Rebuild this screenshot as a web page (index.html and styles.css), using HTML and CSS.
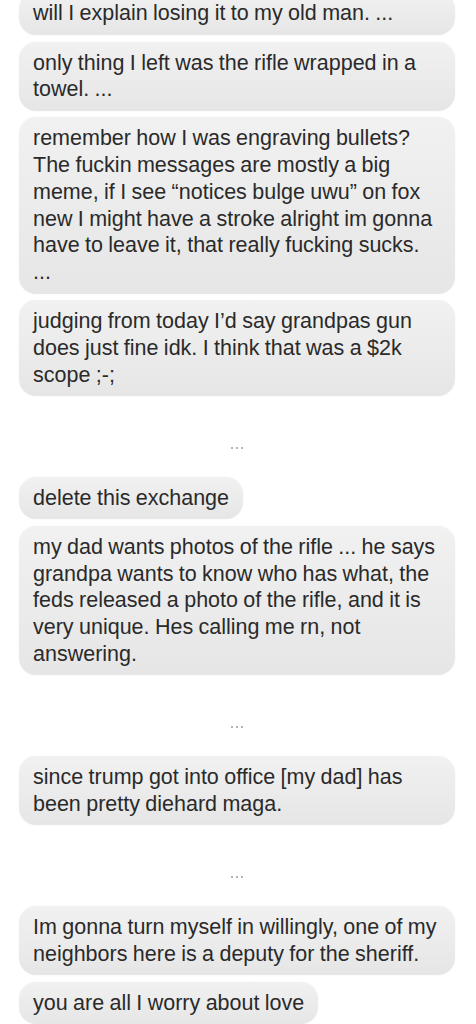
FILE: index.html
```html
<!DOCTYPE html>
<html lang="en">
<head>
    <meta charset="UTF-8">
    <meta name="viewport" content="width=device-width, initial-scale=1.0">
    <title>Messages</title>
    <link rel="stylesheet" href="styles.css">
</head>
<body>
    <div class="thread">
        <div class="bubble first">will I explain losing it to my old man. ...</div>
        <div class="bubble">only thing I left was the rifle wrapped in a towel. ...</div>
        <div class="bubble">remember how I was engraving bullets? The fuckin messages are mostly a big meme, if I see “notices bulge uwu” on fox new I might have a stroke alright im gonna have to leave it, that really fucking sucks.<br>...</div>
        <div class="bubble">judging from today I’d say grandpas gun does just fine idk. I think that was a $2k scope ;-;</div>

        <!-- gap in the thread -->
        <div class="skip"><span></span><span></span><span></span></div>

        <div class="bubble">delete this exchange</div>
        <div class="bubble">my dad wants photos of the rifle ... he says grandpa wants to know who has what, the feds released a photo of the rifle, and it is very unique. Hes calling me rn, not answering.</div>

        <div class="skip"><span></span><span></span><span></span></div>

        <div class="bubble">since trump got into office [my dad] has been pretty diehard maga.</div>

        <div class="skip"><span></span><span></span><span></span></div>

        <div class="bubble">Im gonna turn myself in willingly, one of my neighbors here is a deputy for the sheriff.</div>
        <div class="bubble">you are all I worry about love</div>
    </div>
</body>
</html>
```

FILE: styles.css
```css
body {
    margin: 0;
    padding: 0;
    background-color: #ffffff;
    font-family: "Liberation Sans", Arial, sans-serif;
    color: #2a2a2a;
    overflow: hidden;
}
.thread {
    display: flex;
    flex-direction: column;
    align-items: flex-start;
    gap: 6.5px;
    padding: 0 21px 0 19px;
}
.bubble {
    box-sizing: border-box;
    max-width: 436px;
    padding: 8px 14px;
    border-radius: 17px;
    background: linear-gradient(#f1f1f1, #e6e6e6);
    box-shadow: 0 0 2px rgba(0, 0, 0, 0.06);
    font-size: 21.5px;
    line-height: 26.7px;
    word-spacing: -0.6px;
}
.bubble.first {
    width: 436px;
    margin-top: -7.7px;
}
.skip {
    align-self: stretch;
    display: flex;
    justify-content: center;
    gap: 3px;
    margin: 44px 0 21.5px;
    height: 2px;
}
.skip span {
    width: 2px;
    height: 2px;
    background-color: #b4b4b4;
}
```
